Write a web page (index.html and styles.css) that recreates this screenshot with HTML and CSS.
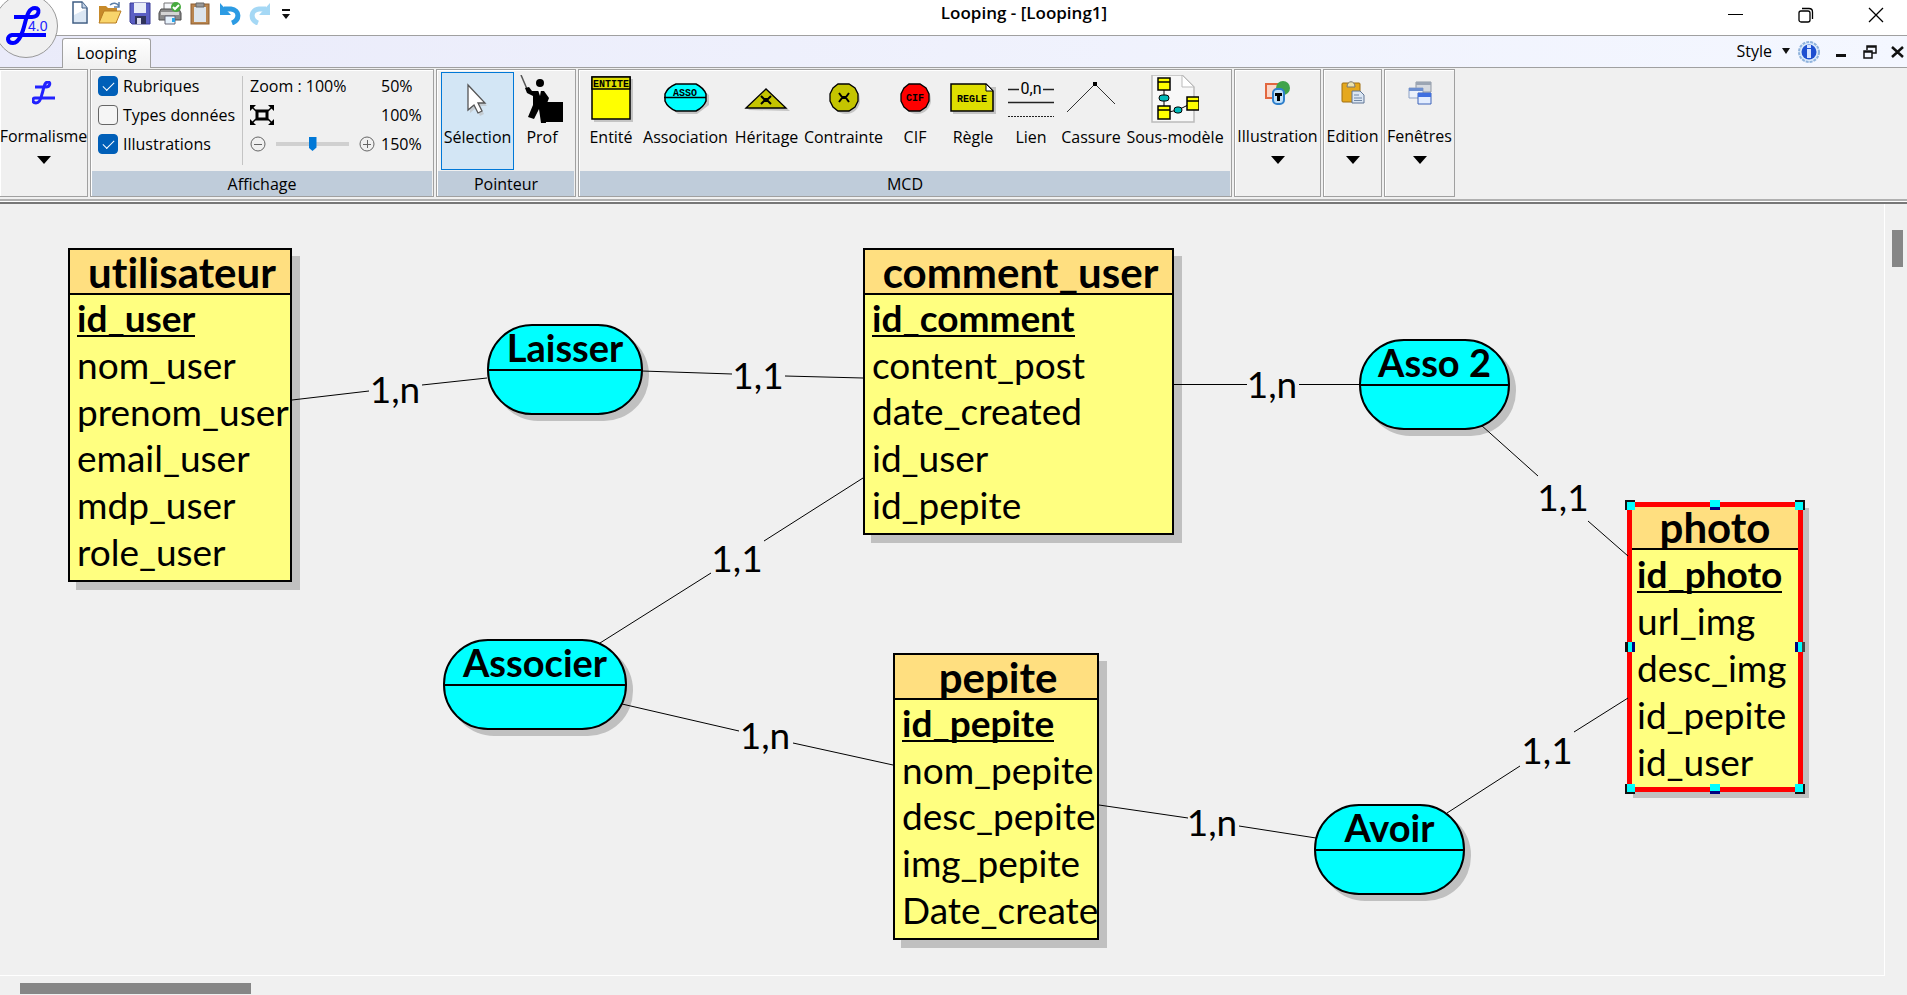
FILE: index.html
```html
<!DOCTYPE html>
<html lang="fr">
<head>
<meta charset="utf-8">
<title>Looping - [Looping1]</title>
<link rel="stylesheet" href="styles.css">
</head>
<body>
<div class="app">
  <header class="titlebar">
    <button class="logo" aria-label="Menu Looping">
      <svg width="58" height="58" viewBox="0 0 58 58">
        <path d="M13 17H31C38 17 40 8 34 8C28 8 26 15 24 23C22 31 19 43 12 43C6 43 5 36 11 35H45" fill="none" stroke="#00f" stroke-width="4"/>
        <text class="logo-version" x="27" y="31">4.0</text>
      </svg>
    </button>
    <nav class="quick">
      <button aria-label="Nouveau"><svg width="24" height="24" viewBox="0 0 24 24"><path d="M5 1h9l5 6v15H5z" fill="#fff" stroke="#3f5d84" stroke-width="1.5"/><path d="M6 14L18 8v13H6z" fill="#dbe7f4"/><path d="M14 1v6h5" fill="#c5d5e8" stroke="#3f5d84"/></svg></button>
      <button aria-label="Ouvrir"><svg width="24" height="24" viewBox="0 0 24 24"><path d="M1 22V5h7l2 2h9v15z" fill="#c78a2a"/><path d="M6 10h17l-5 12H1z" fill="#f9d56b" stroke="#b87d22"/><path d="M12 4c3-3 7-2 9 1M21 1v5h-5" fill="none" stroke="#5c7fa8" stroke-width="1.5"/></svg></button>
      <button aria-label="Enregistrer"><svg width="24" height="24" viewBox="0 0 24 24"><path d="M2 2h20v21H4l-2-2z" fill="#5b5fc4" stroke="#3b3c96"/><path d="M6 2h12v10H6z" fill="#e9edf8"/><path d="M7 15h11v8H7z" fill="#30345c"/><path d="M9 17h4v6H9z" fill="#dde"/></svg></button>
      <button aria-label="Imprimer"><svg width="24" height="24" viewBox="0 0 24 24"><path d="M6 2h11v8H6z" fill="#f5f7fa" stroke="#777"/><path d="M3 8h18l2 4v7H1v-7z" fill="#8a8a8a" stroke="#4b4b4b"/><path d="M3 11h18v3H3z" fill="#d4d4d4"/><path d="M7 15h10v8H7z" fill="#e6f2fc" stroke="#667"/><path d="M14 17h3v4h-3z" fill="#2ba6ea"/><circle cx="18" cy="6" r="5" fill="#46aa3e"/><path d="M15 6l2 2 4-4" fill="none" stroke="#fff" stroke-width="2"/></svg></button>
      <button aria-label="Coller"><svg width="24" height="24" viewBox="0 0 24 24"><rect x="3" y="3" width="18" height="20" fill="#b9854f" stroke="#8d5f33"/><path d="M6 6h12v15H6z" fill="#dce4ec"/><path d="M8 2h8v4H8z" fill="#999" stroke="#666"/></svg></button>
      <button aria-label="Annuler"><svg width="24" height="24" viewBox="0 0 24 24"><path d="M6 8h7c9 1 9 11 1 14" fill="none" stroke="#2c9be3" stroke-width="5"/><path d="M2 2v12h11z" fill="#2c9be3"/></svg></button>
      <button aria-label="Rétablir"><svg width="24" height="24" viewBox="0 0 24 24"><path d="M18 8h-7c-9 1-9 11-1 14" fill="none" stroke="#a5d8f5" stroke-width="5"/><path d="M22 2v12H11z" fill="#a5d8f5"/></svg></button>
      <button aria-label="Personnaliser"><svg width="24" height="24" viewBox="0 0 24 24"><path d="M4 8h8v2H4zM4 13h8l-4 5z" fill="#111"/></svg></button>
    </nav>
    <h1 class="title">Looping - [Looping1]</h1>
    <div class="window-buttons">
      <button aria-label="Réduire"><svg width="16" height="16" viewBox="0 0 16 16"><path d="M0 7.500h15" stroke="#000"/></svg></button>
      <button aria-label="Restaurer"><svg width="16" height="16" viewBox="0 0 16 16" fill="none" stroke="#000" stroke-width="1.300"><rect x="1" y="4" width="11" height="11" rx="2"/><path d="M4 1.500h7c2.500 0 3.500 1 3.500 3.500v7"/></svg></button>
      <button aria-label="Fermer"><svg width="16" height="16" viewBox="0 0 16 16"><path d="M1 1l14 14M15 1L1 15" stroke="#000" stroke-width="1.300"/></svg></button>
    </div>
  </header>

  <div class="tabbar">
    <button class="tab">Looping</button>
    <div class="tab-tools">
      <button class="style-button">Style <svg width="8" height="6" viewBox="0 0 8 6"><path d="M0 0h8L4 6z" fill="#111"/></svg></button>
      <button aria-label="Information"><svg width="24" height="24" viewBox="0 0 24 24"><circle cx="12" cy="12" r="10" fill="#dcebfb" stroke="#8fb2dc" stroke-width="2" stroke-dasharray="3 1"/><circle cx="12" cy="12" r="7.500" fill="#1f4fd0"/><path d="M10 5h4v3h-4zM10 9h4v9h-4z" fill="#d5e2ff"/></svg></button>
      <button aria-label="Réduire le document"><svg width="14" height="14" viewBox="0 0 14 14"><path d="M1 9h10v3H1z" fill="#111"/></svg></button>
      <button aria-label="Restaurer le document"><svg width="14" height="14" viewBox="0 0 14 14" fill="none" stroke="#111" stroke-width="1.500"><path d="M1 6h8v7H1zM4 5V1h9v7H9M1 7h8M4 2h9"/></svg></button>
      <button aria-label="Fermer le document"><svg width="14" height="14" viewBox="0 0 14 14"><path d="M1 2l11 10M12 2L1 12" stroke="#111" stroke-width="2.500"/></svg></button>
    </div>
  </div>

  <div class="ribbon">
    <section class="group group-menu group-first">
      <button class="tool"><span class="icon"><svg width="24" height="24" viewBox="0 0 24 24"><path d="M3 6h11c4 0 5-5 2-5c-4 0-4 6-6 12c-1 5-3 9-6 9c-4 0-4-5-1-5h20" fill="none" stroke="#22f" stroke-width="3"/></svg></span>Formalisme<svg class="arrow" width="14" height="8" viewBox="0 0 14 8"><path d="M0 0h14L7 8z"/></svg></button>
    </section>

    <section class="group group-view">
      <div class="view-body">
        <div class="checks">
          <label><input type="checkbox" checked>Rubriques</label>
          <label><input type="checkbox">Types données</label>
          <label><input type="checkbox" checked>Illustrations</label>
        </div>
        <div class="zoom">
          <span class="zoom-value">Zoom : 100%</span>
          <button>50%</button>
          <button class="fit" aria-label="Ajuster"><svg width="24" height="20" viewBox="0 0 24 20"><path d="M7 6h10v8H7z" fill="none" stroke="#000" stroke-width="3"/><path d="M0 0h6L0 6zM24 0h-6l6 6zM0 20h6l-6-6zM24 20h-6l6-6z"/><path d="M2 2l4 4M22 2l-4 4M2 18l4-4M22 18l-4-4" stroke="#000" stroke-width="1.500"/></svg></button>
          <button>100%</button>
          <div class="slider">
            <button aria-label="Zoom arrière"><svg width="16" height="16" viewBox="0 0 16 16" fill="none" stroke="#666"><circle cx="8" cy="8" r="7"/><path d="M4 8.500h8"/></svg></button>
            <input type="range" min="50" max="150" value="100" aria-label="Zoom">
            <button aria-label="Zoom avant"><svg width="16" height="16" viewBox="0 0 16 16" fill="none" stroke="#666"><circle cx="8" cy="8" r="7"/><path d="M4 8.500h8M8.500 4v8"/></svg></button>
          </div>
          <button>150%</button>
        </div>
      </div>
      <h2 class="group-name">Affichage</h2>
    </section>

    <section class="group group-pointer">
      <div class="tools tools-pointer">
        <button class="tool selected"><span class="icon"><svg width="48" height="48" viewBox="0 0 48 48"><path d="M16 12v26l6-5 4 8 4-2-4-8h7z" fill="#bbb" opacity=".6"/><path d="M14 10v25l6-5 4 8 4-2-4-8h7z" fill="#fff" stroke="#555" stroke-width="1.300"/></svg></span>Sélection</button>
        <button class="tool"><span class="icon"><svg width="48" height="48" viewBox="0 0 48 48"><path d="M3 0l6 14" stroke="#555" stroke-width="1.500"/><circle cx="22" cy="8" r="4"/><path d="M7 13l4-1 3 4h12l5 7-3 8-1-1 1 18h-5l-2-14-5 10-6-2 5-12V21l-6-3z"/><path d="M20 15l2 6 1-6z" fill="#fff"/><path d="M27 27h18v20H27z"/></svg></span>Prof</button>
      </div>
      <h2 class="group-name">Pointeur</h2>
    </section>

    <section class="group group-mcd">
      <div class="tools tools-mcd">
        <button class="tool"><span class="icon"><svg width="44" height="48" viewBox="0 0 44 48"><path d="M5 4h39v43H5z" fill="#c4c4c4"/><path d="M3 2h38v42H3z" fill="#ff0" stroke="#000" stroke-width="1.500"/><path d="M3 2h38v12H3z" fill="#dede00" stroke="#000" stroke-width="1.500"/><text class="glyph" x="22" y="12">ENTITE</text></svg></span>Entité</button>
        <button class="tool"><span class="icon"><svg width="46" height="48" viewBox="0 0 46 48"><path d="M15 11h19l12 9v10l-12 9H15L4 30V20z" fill="#c4c4c4"/><path d="M13 9h20c4 2 8 5 10 10v7c-2 5-6 8-10 10H13c-5-2-9-5-11-10v-7c2-5 6-8 11-10z" fill="#0ff" stroke="#000" stroke-width="1.500"/><path d="M1 22.500h42" stroke="#000" stroke-width="1.500"/><text class="glyph" x="22" y="21">ASSO</text></svg></span>Association</button>
        <button class="tool"><span class="icon"><svg width="46" height="48" viewBox="0 0 46 48"><path d="M4 35L24 16l22 20z" fill="#c4c4c4"/><path d="M2 33L22 14l20 19z" fill="#c4c400" stroke="#000" stroke-width="1.300"/><path d="M17 21l3 3h4l3-3M17 29l3-3h4l3 3" fill="none" stroke="#000" stroke-width="2"/></svg></span>Héritage</button>
        <button class="tool"><span class="icon"><svg width="34" height="48" viewBox="0 0 34 48"><circle cx="19" cy="25" r="14" fill="#c4c4c4"/><path d="M11 9h11l6 4 3 6v7l-3 6-6 4H11l-5-4-3-6v-7l3-6z" fill="#c4c400" stroke="#000" stroke-width="1.300"/><path d="M12 18l3 4h4l3-4M12 27l3-4h4l3 4" fill="none" stroke="#000" stroke-width="2"/></svg></span>Contrainte</button>
        <button class="tool"><span class="icon"><svg width="34" height="48" viewBox="0 0 34 48"><circle cx="19" cy="25" r="14" fill="#c4c4c4"/><path d="M11 9h11l6 4 3 6v7l-3 6-6 4H11l-5-4-3-6v-7l3-6z" fill="#f00" stroke="#000" stroke-width="1.300"/><text class="glyph" x="17" y="26">CIF</text></svg></span>CIF</button>
        <button class="tool"><span class="icon"><svg width="46" height="48" viewBox="0 0 46 48"><path d="M3 12h43v27H3z" fill="#c4c4c4"/><path d="M1 9h35l7 7v20H1z" fill="#dede00" stroke="#000" stroke-width="1.500"/><path d="M36 9v7h7z" fill="#fff" stroke="#000"/><text class="glyph" x="22" y="27">REGLE</text></svg></span>Règle</button>
        <button class="tool"><span class="icon"><svg width="48" height="48" viewBox="0 0 48 48"><path d="M1 14.500h11M36 14.500h11M1 27.500h46" stroke="#222" stroke-width="1.500"/><path d="M1 41.500h46" stroke="#222" stroke-dasharray="2 1"/><text class="glyph-line" x="24" y="19">0,n</text></svg></span>Lien</button>
        <button class="tool"><span class="icon"><svg width="48" height="48" viewBox="0 0 48 48"><path d="M0 37L28 9l20 20" fill="none" stroke="#333"/><path d="M26 7h4v4h-4z"/></svg></span>Cassure</button>
        <button class="tool"><span class="icon"><svg width="48" height="48" viewBox="0 0 48 48"><path d="M1 0h30l12 12v35H1z" fill="#f8f8f8" stroke="#bbb" stroke-width="1.500"/><path d="M31 0v12h12z" fill="#fff" stroke="#bbb"/><path d="M13 12v26l14-3 14-7" fill="none" stroke="#000"/><g fill="#ff0" stroke="#000" stroke-width="1.500"><path d="M7 3h12v12H7zM7 7h12M7 31h12v13H7zM7 35h12M36 22h12v13H36zM36 26h12"/></g><rect x="8" y="20" width="10" height="6" rx="3" fill="#0bb" stroke="#000"/><rect x="23" y="32" width="8" height="6" rx="3" fill="#0bb" stroke="#000"/></svg></span>Sous-modèle</button>
      </div>
      <h2 class="group-name">MCD</h2>
    </section>

    <section class="group group-menu group-illustration">
      <button class="tool"><span class="icon"><svg width="26" height="24" viewBox="0 0 26 24"><path d="M1 3h14v14H1z" fill="#fbd7c8" stroke="#e2673f" stroke-width="2"/><circle cx="18" cy="7" r="7" fill="#3fa34a"/><rect x="8" y="8" width="11" height="15" rx="4" fill="#bfe0fa" stroke="#2f7fcb" stroke-width="2"/><path d="M10 12h7v3h-2v5h-3v-5h-2z"/></svg></span>Illustration<svg class="arrow" width="14" height="8" viewBox="0 0 14 8"><path d="M0 0h14L7 8z"/></svg></button>
    </section>
    <section class="group group-menu group-edition">
      <button class="tool"><span class="icon"><svg width="24" height="24" viewBox="0 0 24 24"><rect x="1" y="2" width="18" height="19" rx="1" fill="#e5a81d" stroke="#a06f10"/><path d="M6 6c0-7 8-7 8 0z" fill="#ece3b0" stroke="#777"/><path d="M11 10h8l4 4v8H11z" fill="#dbe6f3" stroke="#5f7594"/><path d="M13 14h5M13 17h8M13 19.500h8" stroke="#7187a6"/></svg></span>Edition<svg class="arrow" width="14" height="8" viewBox="0 0 14 8"><path d="M0 0h14L7 8z"/></svg></button>
    </section>
    <section class="group group-menu group-windows">
      <button class="tool"><span class="icon"><svg width="24" height="24" viewBox="0 0 24 24"><path d="M8 1h15v10H8z" fill="#d5d9df" stroke="#8f98a5"/><path d="M8 1h15v3H8z" fill="#9ba5b3"/><path d="M1 7h14v10H1z" fill="#eaf0fa" stroke="#8ea2c6"/><path d="M1 7h14v3H1z" fill="#6d8fd0"/><path d="M10 12h13v11H10z" fill="#e3edff" stroke="#3d62b8"/><path d="M10 12h13v4H10z" fill="#3f6fe0"/></svg></span>Fenêtres<svg class="arrow" width="14" height="8" viewBox="0 0 14 8"><path d="M0 0h14L7 8z"/></svg></button>
    </section>
  </div>

  <main class="workspace">
    <div class="canvas">
      <svg class="links" width="1884" height="771" viewBox="0 204 1884 771">
        <path d="M292 400L369 391M422 385L487 378M642 371L732 374M785 376L863 378M1173 384.500H1247M1299 384.500H1360M1481 425L1538 476M1588 521L1628 556M863 478L764 541M711 573L600 643M622 704L739 731M793 743L893 765M1099 805L1188 818M1239 826L1316 838M1447 813L1520 766M1574 732L1628 698"/>
        <g class="cardinality">
          <text x="395" y="403">1,n</text>
          <text x="758" y="389">1,1</text>
          <text x="1272" y="398">1,n</text>
          <text x="1563" y="511">1,1</text>
          <text x="737" y="572">1,1</text>
          <text x="765" y="749">1,n</text>
          <text x="1212" y="836">1,n</text>
          <text x="1547" y="764">1,1</text>
        </g>
      </svg>

      <article class="entity utilisateur"><h3>utilisateur</h3><ul><li class="key"><u>id_user</u></li><li>nom_user</li><li>prenom_user</li><li>email_user</li><li>mdp_user</li><li>role_user</li></ul></article>
      <article class="entity comment"><h3>comment_user</h3><ul><li class="key"><u>id_comment</u></li><li>content_post</li><li>date_created</li><li>id_user</li><li>id_pepite</li></ul></article>
      <article class="entity pepite"><h3>pepite</h3><ul><li class="key"><u>id_pepite</u></li><li>nom_pepite</li><li>desc_pepite</li><li>img_pepite</li><li>Date_create</li></ul></article>
      <article class="entity photo"><h3>photo</h3><ul><li class="key"><u>id_photo</u></li><li>url_img</li><li>desc_img</li><li>id_pepite</li><li>id_user</li></ul>
        <div class="handles"><i class="start"></i><i class="mid"></i><i class="end"></i><i class="side"></i><i class="none"></i><i class="side right"></i><i class="start low"></i><i class="mid"></i><i class="end low"></i></div>
      </article>

      <div class="association laisser">Laisser</div>
      <div class="association asso2">Asso 2</div>
      <div class="association associer">Associer</div>
      <div class="association avoir">Avoir</div>
    </div>
    <div class="scroll-v"><div class="thumb"></div></div>
    <div class="scroll-h"><div class="thumb"></div></div>
  </main>
</div>
</body>
</html>
```
FILE: styles.css
```css
* { box-sizing: border-box; }

body {
  margin: 0;
  background: #f0f0f0;
  color: #000;
  font: 16px/20px "Open Sans", "Noto Sans", sans-serif;
}

button {
  margin: 0;
  padding: 0;
  border: 0;
  background: none;
  color: inherit;
  font: inherit;
}

svg { display: block; }
h1, h2, h3, ul { margin: 0; padding: 0; font-weight: 400; }

.app {
  display: flex;
  flex-direction: column;
  height: 100vh;
  overflow: hidden;
}

/* Title bar */
.titlebar {
  display: grid;
  grid-template-columns: 1fr auto 1fr;
  position: relative;
  height: 36px;
  flex: none;
  background: #fff;
  border-bottom: 1px solid #a0a0a0;
}

.logo {
  position: absolute;
  z-index: 2;
  left: -6px;
  top: -6px;
  width: 64px;
  height: 64px;
  padding: 5px 0 0 6px;
  border: 1px solid #999;
  border-radius: 50%;
  background: #f0f0f0;
  overflow: hidden;
}

.logo-version { font: 14px "Liberation Sans", sans-serif; fill: #22f; }

.quick {
  display: flex;
  gap: 6px;
  padding: 1px 0 0 68px;
}

.quick button { height: 24px; }

.title {
  padding: 3px 0 0 141px;
  font-size: 17px;
  font-weight: 600;
}

.window-buttons {
  display: flex;
  justify-content: flex-end;
  align-items: flex-start;
  gap: 54px;
  padding: 7px 23px 0 0;
}

/* Tab bar */
.tabbar {
  display: flex;
  justify-content: space-between;
  align-items: flex-end;
  height: 32px;
  flex: none;
  padding-left: 62px;
  background: linear-gradient(90deg, #eaebfa, #f4f7ff);
  border-bottom: 1px solid #a0a0a0;
}

.tab {
  width: 89px;
  height: 30px;
  margin-bottom: -1px;
  padding-bottom: 2px;
  border: 1px solid #a0a0a0;
  border-bottom: 0;
  border-radius: 3px 3px 0 0;
  background: linear-gradient(#fff, #f0f0f0);
}

.tab-tools {
  display: flex;
  align-items: center;
  gap: 14px;
  height: 31px;
  padding-right: 2px;
}

.style-button {
  display: flex;
  align-items: center;
  gap: 10px;
  margin-right: -7px;
  padding-bottom: 2px;
}

/* Ribbon */
.ribbon {
  display: flex;
  gap: 2px;
  height: 136px;
  flex: none;
  padding: 1px 0 5px;
  border-bottom: 2px solid #777;
  box-shadow: inset 0 -1px #fff, inset 0 -3px #b0b0b0;
}

.group {
  display: flex;
  flex-direction: column;
  border: 1px solid #a0a0a0;
  box-shadow: inset 1px 1px #fff;
  background: #f0f0f0;
}

.group-first { width: 88px; border-left: 0; }
.group-view { width: 344px; }
.group-pointer { width: 140px; }
.group-mcd { width: 654px; }
.group-illustration { width: 87px; }
.group-edition { width: 59px; }
.group-windows { width: 71px; }

.group-name {
  margin: auto 1px 0;
  height: 25px;
  background: #bfccda;
  font-size: 16px;
  line-height: 26px;
  text-align: center;
}

.tools { display: grid; padding: 2px 4px 0; }
.tools-pointer { grid-template-columns: 73px 1fr; padding-right: 5px; }
.tools-mcd {
  grid-template-columns: 56px 93px 69px 85px 58px 58px 58px 62px 106px;
}

.tool {
  display: flex;
  flex-direction: column;
  align-items: center;
  height: 98px;
  min-width: 0;
  border: 1px solid transparent;
  white-space: nowrap;
}

.tool .icon { height: 48px; margin: 2px 0 4px; }
.tool.selected { background: #d3e6f5; border-color: #0078d7; }

.group-menu .tool { height: 108px; padding-top: 10px; }
.group-menu .icon { height: 24px; margin: 0 0 21px; }
.group-menu .arrow { margin-top: 10px; }

.glyph {
  font: 700 10px "Liberation Mono", monospace;
  text-anchor: middle;
}
.glyph-line { font: 16px Roboto, sans-serif; text-anchor: middle; }

.view-body { display: flex; padding: 6px 7px 0; }

.checks {
  display: grid;
  grid-template-rows: repeat(3, 29px);
  width: 145px;
  height: 89px;
  border-right: 1px solid #c4c4c4;
}

.checks label {
  display: flex;
  gap: 5px;
  height: 20px;
  white-space: nowrap;
}

.checks input {
  appearance: none;
  width: 20px;
  height: 20px;
  margin: 0;
  border: 1px solid #666;
  border-radius: 4px;
  background: #f5f5f5;
}

.checks input:checked { background: #005fb8; border-color: #005fb8; }
.checks input:checked::after {
  content: "";
  display: block;
  width: 10px;
  height: 5px;
  margin: 5px 4px;
  border: solid #fff;
  border-width: 0 0 1px 1px;
  transform: rotate(-45deg);
}

.zoom {
  display: grid;
  grid-template-columns: 131px auto;
  grid-template-rows: repeat(3, 29px);
  justify-items: start;
  padding-left: 7px;
}

.zoom > * { height: 20px; }

.slider { display: flex; align-items: center; gap: 10px; }

.slider input {
  appearance: none;
  width: 73px;
  height: 14px;
  margin: 0;
  background: linear-gradient(#d0d0d0, #d0d0d0) center / 100% 4px no-repeat;
}

.slider input::-webkit-slider-thumb {
  appearance: none;
  width: 8px;
  height: 14px;
  background: #0078d7;
  clip-path: polygon(0 0, 100% 0, 100% 75%, 50% 100%, 0 75%);
}

/* Workspace */
.workspace {
  display: grid;
  grid-template: 1fr 19px / 1fr 22px;
  flex: 1;
  min-height: 0;
}

.canvas {
  position: relative;
  overflow: hidden;
  border-right: 1px solid #fff;
  border-bottom: 1px solid #fff;
  font-family: Lato, "Open Sans", sans-serif;
  font-size: 37px;
  font-variant-ligatures: none;
}

.scroll-v { padding: 26px 4px 0 7px; }
.scroll-v .thumb { height: 37px; background: #868686; }
.scroll-h { padding: 7px 20px 0; }
.scroll-h .thumb { width: 231px; height: 11px; background: #868686; }

.links { position: absolute; z-index: 1; left: 0; top: 0; }
.links path { stroke: #000; fill: none; }
.cardinality text { text-anchor: middle; }

.entity {
  position: absolute;
  display: flex;
  flex-direction: column;
  height: 287px;
  border: 2px solid #000;
  background: #ffff80;
  box-shadow: 8px 8px #c0c0c0;
}

.entity h3 {
  height: 45px;
  flex: none;
  padding-left: 4px;
  border-bottom: 2px solid #000;
  background: #ffdf80;
  font-size: 42px;
  font-weight: 700;
  line-height: 44px;
  text-align: center;
}

.entity ul {
  display: grid;
  grid-auto-rows: 1fr;
  align-items: center;
  flex: 1;
  padding: 0 0 5px 7px;
  list-style: none;
  line-height: 40px;
  white-space: nowrap;
}

.key { font-weight: 700; }
.key u {
  display: inline-block;
  height: 39px;
  text-decoration: none;
  border-bottom: 2px solid #000;
}

.utilisateur { left: 68px; top: 44px; width: 224px; height: 334px; }
.comment { left: 863px; top: 44px; width: 311px; }
.pepite { left: 893px; top: 449px; width: 206px; }
.photo {
  left: 1627px;
  top: 298px;
  width: 176px;
  height: 290px;
  border: 5px solid #f00;
  box-shadow: 6px 6px #c0c0c0;
}
.photo h3 { height: 43px; padding-left: 0; line-height: 40px; }
.photo ul { padding: 0 0 1px 5px; }

.handles {
  position: absolute;
  inset: -7px;
  display: grid;
  grid-template-columns: repeat(3, 10px);
  grid-template-rows: repeat(3, 10px);
  justify-content: space-between;
  align-content: space-between;
}

.handles i { background: #0ff; border: 0 solid #111; }
.handles .start { border-width: 2px 0 0 2px; }
.handles .end { border-width: 2px 2px 0 0; }
.handles .start.low { border-width: 0 0 2px 2px; }
.handles .end.low { border-width: 0 2px 2px 0; }
.handles .mid { border-width: 0 0 3px; border-color: #000080; }
.handles .side { border-width: 0 3px; border-color: #111 #000080 #111 #111; }
.handles .side.right { border-color: #111 #444 #111 #000080; }
.handles .none { visibility: hidden; }

.association {
  position: absolute;
  height: 91px;
  border: 2px solid #000;
  border-radius: 45px;
  background: linear-gradient(#000, #000) 0 43px / 100% 2px no-repeat, #0ff;
  box-shadow: 6px 6px #c0c0c0;
  font-size: 38px;
  font-weight: 700;
  line-height: 43px;
  text-align: center;
}

.laisser { left: 487px; top: 120px; width: 156px; }
.asso2 { left: 1359px; top: 135px; width: 151px; }
.associer { left: 443px; top: 435px; width: 184px; }
.avoir { left: 1314px; top: 600px; width: 151px; }
```
